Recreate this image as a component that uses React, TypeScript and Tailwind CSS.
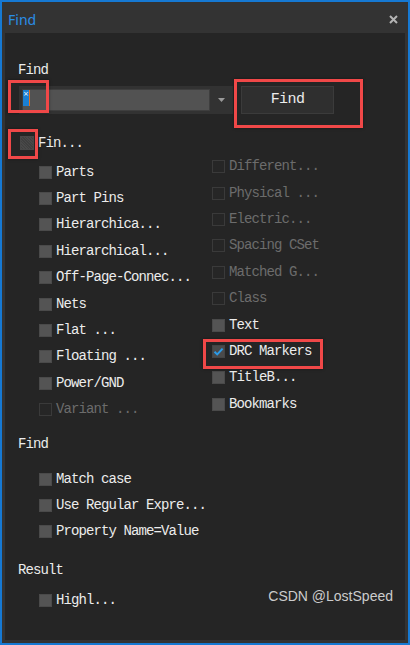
import React from "react";

type State = "off" | "disabled" | "checked" | "indet";

const mono = "font-['Liberation_Mono'] text-[14px] tracking-[-0.9px]";

function Box({ state }: { state: State }) {
  if (state === "disabled") {
    return <div className="w-[13px] h-[13px] shrink-0 border border-[#3a3a3a] bg-[#262626]" />;
  }
  if (state === "indet") {
    return (
      <div
        className="w-[14px] h-[14px] shrink-0 bg-[#3f3f3f] border border-[#474747]"
        style={{
          backgroundImage:
            "repeating-linear-gradient(45deg, rgba(255,255,255,0.05) 0 1px, transparent 1px 2px)",
        }}
      />
    );
  }
  if (state === "checked") {
    return (
      <div className="w-[13px] h-[13px] shrink-0 bg-[#4a4a4a] border border-[#444] flex items-center justify-center">
        <svg width="11" height="11" viewBox="0 0 11 11">
          <path d="M1.5 5.8 L4.2 8.4 L9.6 2.6" fill="none" stroke="#2b9be8" strokeWidth="2" />
        </svg>
      </div>
    );
  }
  return <div className="w-[13px] h-[13px] shrink-0 bg-[#545454] border border-[#4a4a4a]" />;
}

function Row({ label, state, h = "h-[26.4px]" }: { label: string; state: State; h?: string }) {
  return (
    <div className={`${h} flex items-center gap-[4px]`}>
      <Box state={state} />
      <span className={`${mono} whitespace-pre ${state === "disabled" ? "text-[#6c6c6c]" : "text-[#ececec]"}`}>
        {label}
      </span>
    </div>
  );
}

const left: [string, State][] = [
  ["Parts", "off"],
  ["Part Pins", "off"],
  ["Hierarchica...", "off"],
  ["Hierarchical...", "off"],
  ["Off-Page-Connec...", "off"],
  ["Nets", "off"],
  ["Flat ...", "off"],
  ["Floating ...", "off"],
  ["Power/GND", "off"],
  ["Variant ...", "disabled"],
];

const right: [string, State][] = [
  ["Different...", "disabled"],
  ["Physical ...", "disabled"],
  ["Electric...", "disabled"],
  ["Spacing CSet", "disabled"],
  ["Matched G...", "disabled"],
  ["Class", "disabled"],
  ["Text", "off"],
  ["DRC Markers", "checked"],
  ["TitleB...", "off"],
  ["Bookmarks", "off"],
];

const red = "absolute border-[3px] border-[#f04848] shadow-[0_0_3px_rgba(0,0,0,0.4)] pointer-events-none";

export default function App() {
  return (
    <div className="w-[410px] h-[645px] bg-[#1679d3] p-[2px]">
      <div className="w-full h-full bg-[#333333] flex flex-col">
        <div className="h-[31px] shrink-0 flex items-center justify-between pl-[6px] pr-[10px] pt-[4px]">
          <span className="font-['Noto_Sans'] text-[14px] text-[#2a8ee6]">Find</span>
          <svg width="9" height="9" viewBox="0 0 9 9" className="mb-[1px]">
            <path d="M1 1 L8 8 M8 1 L1 8" stroke="#b4b4b4" strokeWidth="2" />
          </svg>
        </div>
        <div className="flex-1 bg-[#252525] mx-[3px] mb-[3px] relative flex flex-col">
          <div className={`${mono} mt-[29px] ml-[13px] h-[16px] leading-[16px] text-[#ececec]`}>Find</div>
          <div className="mt-[8px] ml-[14px] flex h-[28px]">
            <div className="w-[214px] h-[28px] bg-[#323232] flex items-center pl-[3px]">
              <div className="w-[188px] h-[22px] bg-[#525252] border border-[#3e3e3e] flex items-start">
                <div className="w-[6px] h-[16px] bg-[#1a7fd4] flex justify-center">
                  <span className="text-[7px] leading-[8px] text-white font-['DejaVu_Sans']">×</span>
                </div>
                <div className="w-[1px] h-[16px] bg-[#e07020]" />
              </div>
              <div className="flex-1 flex justify-center">
                <svg width="7" height="4" viewBox="0 0 7 4">
                  <path d="M0 0 L7 0 L3.5 4 Z" fill="#9a9a9a" />
                </svg>
              </div>
            </div>
            <div className="ml-[8px] w-[93px] h-[28px] bg-[#2f2f2f] border border-[#3b3b3b] flex items-center justify-center font-['Liberation_Mono'] text-[15px] tracking-[-0.6px] text-[#ececec]">
              Find
            </div>
          </div>
          <div className="mt-[16px] ml-[15px] h-[26px] flex items-center gap-[4px]">
            <Box state="indet" />
            <span className={`${mono} text-[#ececec]`}>Fin...</span>
          </div>
          <div className="flex ml-[34px]">
            <div className="w-[173px] pt-[3px] flex flex-col">
              {left.map(([l, s]) => (
                <Row key={l} label={l} state={s} />
              ))}
            </div>
            <div className="-mt-[2.5px] flex flex-col">
              {right.map(([l, s]) => (
                <Row key={l} label={l} state={s} />
              ))}
            </div>
          </div>
          <div className={`${mono} mt-[13px] ml-[13px] h-[16px] leading-[16px] text-[#ececec]`}>Find</div>
          <div className="mt-[14px] ml-[34px] flex flex-col">
            <Row label="Match case" state="off" h="h-[26.2px]" />
            <Row label="Use Regular Expre..." state="off" h="h-[26.2px]" />
            <Row label="Property Name=Value" state="off" h="h-[26.2px]" />
          </div>
          <div className={`${mono} mt-[17.4px] ml-[13px] h-[16px] leading-[16px] text-[#ececec]`}>Result</div>
          <div className="mt-[9.5px] ml-[34px] flex flex-col">
            <Row label="Highl..." state="off" />
          </div>

          <div className="absolute right-[12px] bottom-[36px] font-['Liberation_Sans'] text-[14px] leading-[16px] text-[#cccccc]">
            CSDN @LostSpeed
          </div>

          <div className={`${red} left-[3px] top-[47px] w-[41px] h-[33px]`} />
          <div className={`${red} left-[229px] top-[46px] w-[129px] h-[49px]`} />
          <div className={`${red} left-[3px] top-[96px] w-[30px] h-[30px]`} />
          <div className={`${red} left-[198px] top-[306px] w-[120px] h-[30px]`} />
        </div>
      </div>
    </div>
  );
}
